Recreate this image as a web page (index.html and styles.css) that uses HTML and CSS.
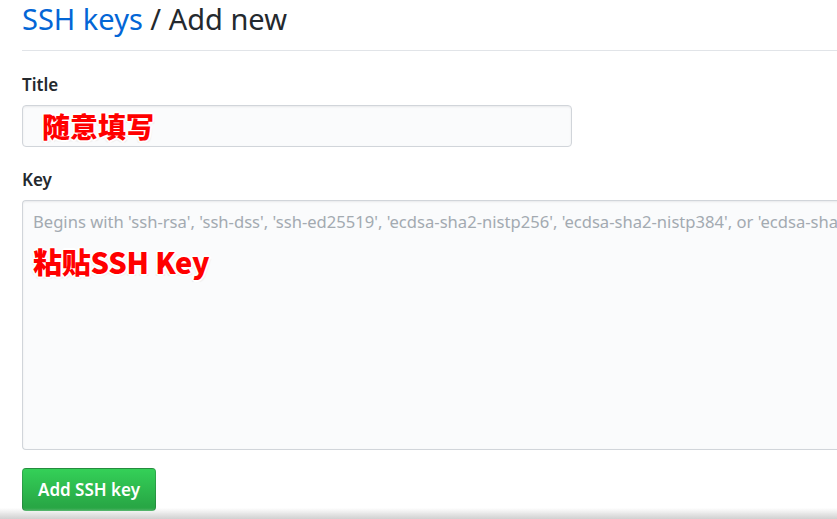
FILE: index.html
```html
<!DOCTYPE html>
<html>
<head>
<meta charset="utf-8">
<link rel="stylesheet" href="styles.css">
</head>
<body>
<div class="page">
  <div class="subhead">
    <h2 class="subhead-title"><a class="link" href="#">SSH keys</a> / Add new</h2>
  </div>
  <form class="form">
    <div class="group">
      <label class="label">Title</label>
      <div class="input"><span class="note note-title">随意填写</span></div>
    </div>
    <div class="group">
      <label class="label">Key</label>
      <div class="textarea">
        <div class="placeholder">Begins with 'ssh-rsa', 'ssh-dss', 'ssh-ed25519', 'ecdsa-sha2-nistp256', 'ecdsa-sha2-nistp384', or 'ecdsa-sha2-nistp521'</div>
        <div class="note note-key">粘贴SSH Key</div>
      </div>
    </div>
    <button type="button" class="btn">Add SSH key</button>
  </form>
</div>
<div class="bottom-shade"></div>
</body>
</html>
```
FILE: styles.css
```css
html, body {
  margin: 0;
  padding: 0;
  background: #fff;
  overflow: hidden;
}
body {
  font-family: "Noto Sans", "Open Sans", "Liberation Sans", "Noto Sans CJK SC", sans-serif;
  color: #24292e;
  font-size: 17.5px;
}
.page {
  padding-left: 22px;
}
.subhead {
  border-bottom: 1px solid #e1e4e8;
  height: 51px;
  box-sizing: border-box;
  display: flex;
  align-items: flex-start;
}
.subhead-title {
  margin: 0;
  margin-top: -3px;
  font-size: 29px;
  font-weight: 400;
  line-height: 44px;
  white-space: nowrap;
}
.link {
  color: #0366d6;
  text-decoration: none;
}
.form {
  display: flex;
  flex-direction: column;
  align-items: flex-start;
}
.group {
  display: flex;
  flex-direction: column;
  width: 100%;
}
.label {
  font-weight: 600;
  font-size: 17px;
  line-height: 22px;
  margin-top: 23px;
  margin-bottom: 9px;
}
.group + .group .label {
  margin-top: 22px;
  margin-bottom: 9px;
}
.input {
  width: 550px;
  height: 42px;
  box-sizing: border-box;
  border: 1px solid #d1d5da;
  border-radius: 4px;
  background: #fafbfc;
  box-shadow: inset 0 1px 2px rgba(27,31,35,0.075);
  display: flex;
  align-items: center;
  padding-left: 19px;
}
.note {
  color: #ff0000;
  font-family: "Noto Sans CJK SC", "Noto Sans", sans-serif;
  font-weight: 900;
  text-shadow: 0 0 3px #fff, 1px 1px 0 #fff, -1px -1px 0 #fff, 1px -1px 0 #fff, -1px 1px 0 #fff, 2px 0 0 #fff, -2px 0 0 #fff, 0 2px 0 #fff, 0 -2px 0 #fff, 2px 2px 1px #eee, -2px 2px 1px #eee;
}
.note-title {
  font-size: 28px;
  line-height: 32px;
  margin-top: 0;
}
.textarea {
  width: 840px;
  height: 250px;
  box-sizing: border-box;
  border: 1px solid #d1d5da;
  border-right: none;
  border-radius: 4px 0 0 4px;
  background: #fafbfc;
  box-shadow: inset 0 1px 2px rgba(27,31,35,0.075);
  padding: 8px 0 0 10px;
  overflow: hidden;
}
.placeholder {
  color: #a3aab1;
  font-size: 16.6px;
  line-height: 26px;
  white-space: nowrap;
  font-family: "Noto Sans", sans-serif;
}
.note-key {
  font-size: 29px;
  line-height: 36px;
  margin-top: 8px;
  letter-spacing: -0.2px;
}
.btn {
  margin-top: 18px;
  width: 134px;
  height: 43px;
  border: 1px solid rgba(27,31,35,0.2);
  border-radius: 4px;
  background: linear-gradient(#34d058, #28a745 90%);
  color: #fff;
  font-family: "Noto Sans", sans-serif;
  font-weight: 600;
  font-size: 17px;
  padding: 0;
  cursor: pointer;
}
.bottom-shade {
  position: fixed;
  left: 0;
  right: 0;
  bottom: 0;
  height: 11px;
  background: linear-gradient(rgba(255,255,255,0), #d0d0d0);
  pointer-events: none;
}
```
